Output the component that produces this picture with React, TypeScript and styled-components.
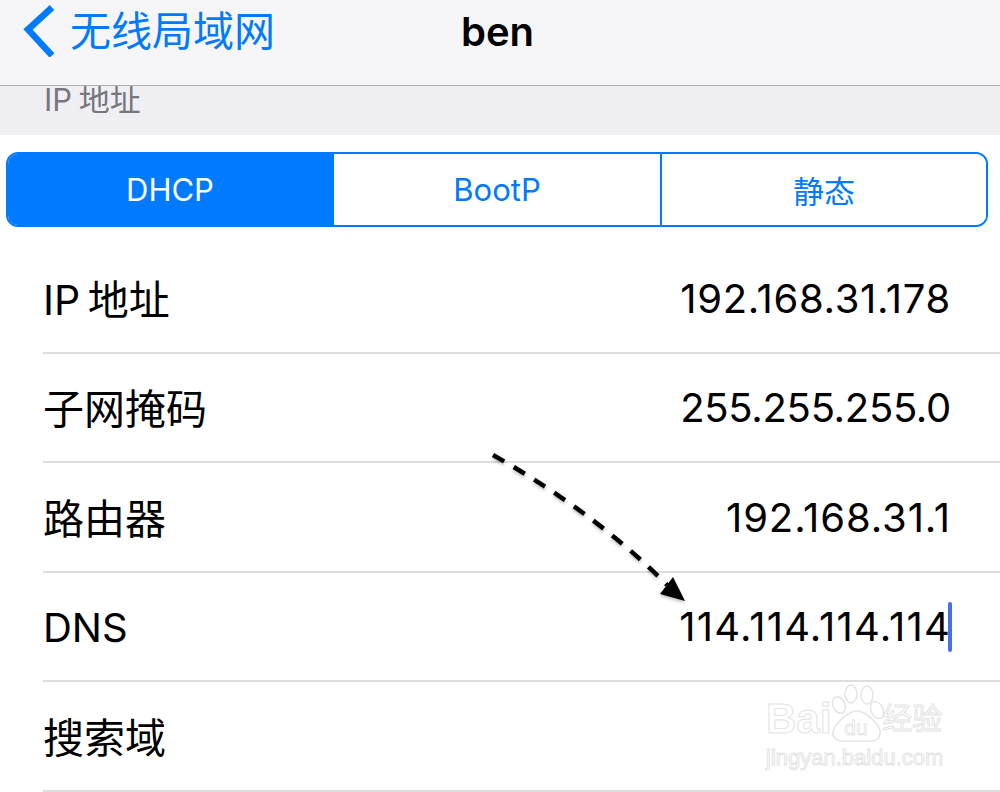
import React from "react";
import styled, { createGlobalStyle } from "styled-components";

const FONT = `Inter, "Noto Sans CJK SC", sans-serif`;

const rows = [
	{ label: "IP 地址", value: "192.168.31.178", tracking: 0.7 },
	{ label: "子网掩码", value: "255.255.255.0", tracking: -0.3 },
	{ label: "路由器", value: "192.168.31.1", tracking: 0.9 },
	{ label: "DNS", value: "114.114.114.114", tracking: 1.2, latin: true, focused: true },
	{ label: "搜索域", value: "", tracking: 0 },
];

const segments = ["DHCP", "BootP", "静态"];

const App = () => {
	return (
		<>
			<GlobalStyle />
			<Page>
				<NavBar>
					<BackLink>
						<svg width="34" height="52" viewBox="0 0 34 52">
							<path d="M30 4 L6 26 L30 52" transform="translate(0 -1.500)" fill="none" stroke="#007aff" strokeWidth="6.500" />
						</svg>
						<BackLabel>无线局域网</BackLabel>
					</BackLink>
					<NavTitle>ben</NavTitle>
				</NavBar>
				<SectionHeader>
					<SectionLabel>IP 地址</SectionLabel>
				</SectionHeader>
				<SegmentWrap>
					<Segmented>
						{segments.map((label, index) => (
							<Segment key={label} $active={index === 0}>
								{label}
							</Segment>
						))}
					</Segmented>
				</SegmentWrap>
				<List>
					{rows.map((row) => (
						<Row key={row.label}>
							<RowLabel $latin={row.latin}>{row.label}</RowLabel>
							<RowValue $tracking={row.tracking}>
								{row.value}
								{row.focused && <Caret />}
							</RowValue>
						</Row>
					))}
				</List>
				<ArrowMark width="210" height="160" viewBox="0 0 210 160">
					<defs>
						<filter id="soft" x="-10%" y="-10%" width="120%" height="120%">
							<feDropShadow dx="0" dy="2" stdDeviation="1.500" floodColor="#000" floodOpacity="0.25" />
						</filter>
					</defs>
					<g filter="url(#soft)">
						<path d="M3 3 C60 35 125 80 177 133" fill="none" stroke="#000" strokeWidth="4.500" strokeDasharray="13 11" />
						<path d="M195 149 L170 142 L183 125 Z" fill="#000" />
					</g>
				</ArrowMark>
				<Watermark>
					<PawRow>
						<WatermarkBrand>Bai</WatermarkBrand>
						<svg width="54" height="60" viewBox="0 0 54 60">
							<g fill="#fff" stroke="#e4e4e4" strokeWidth="1.500">
								<ellipse cx="8" cy="21" rx="6" ry="8.500" transform="rotate(-25 8 21)" />
								<ellipse cx="20" cy="10" rx="6" ry="9" />
								<ellipse cx="36" cy="11" rx="6" ry="9" />
								<ellipse cx="46" cy="26" rx="6" ry="9" transform="rotate(-25 46 26)" />
								<path d="M26 27 C35 27 51 42 49 50 C47 60 36 57 26 57 C16 57 4 60 2 50 C1 42 17 27 26 27 Z" />
							</g>
							<PawText x="25" y="51" textAnchor="middle">
								du
							</PawText>
						</svg>
						<WatermarkCn>经验</WatermarkCn>
					</PawRow>
					<WatermarkUrl>jingyan.baidu.com</WatermarkUrl>
				</Watermark>
			</Page>
		</>
	);
};

const GlobalStyle = createGlobalStyle`
	html, body {
		margin: 0;
		padding: 0;
		background: #fff;
	}
	body {
		font-family: ${FONT};
	}
`;
const Page = styled.div`
	position: relative;
	width: 1000px;
	height: 792px;
	overflow: hidden;
	background: #fff;
`;
const NavBar = styled.div`
	position: relative;
	display: flex;
	align-items: center;
	justify-content: center;
	height: 86px;
	box-sizing: border-box;
	padding: 0 5px 23px 0;
	background: #f6f6f8;
	border-bottom: 1px solid #b1b1b4;
`;
const BackLink = styled.div`
	position: absolute;
	left: 22px;
	top: 5px;
	display: flex;
	align-items: center;
	gap: 14px;
`;
const BackLabel = styled.span`
	font-size: 41px;
	line-height: 52px;
	color: #007aff;
`;
const NavTitle = styled.span`
	font-size: 40px;
	font-weight: 600;
	color: #000;
`;
const SectionHeader = styled.div`
	height: 49px;
	background: #efeff4;
	padding-left: 44px;
	overflow: hidden;
`;
const SectionLabel = styled.div`
	font-size: 31px;
	line-height: 32px;
	word-spacing: -2px;
	margin-top: -2px;
	color: #77777c;
`;
const SegmentWrap = styled.div`
	padding: 17px 12px 17px 6px;
`;
const Segmented = styled.div`
	display: grid;
	grid-template-columns: 324px 328px 1fr;
	height: 75px;
	box-sizing: border-box;
	border: 2px solid #007aff;
	border-radius: 12px;
	overflow: hidden;
`;
const Segment = styled.div<{ $active?: boolean }>`
	display: flex;
	align-items: center;
	justify-content: center;
	font-size: 31px;
	color: ${(p) => (p.$active ? "#fff" : "#007aff")};
	background: ${(p) => (p.$active ? "#007aff" : "#fff")};
	& + & {
		border-left: 2px solid #007aff;
	}
`;
const List = styled.div`
	padding-left: 43px;
`;
const Row = styled.div`
	display: flex;
	align-items: center;
	justify-content: space-between;
	height: 109.5px;
	box-sizing: border-box;
	padding-right: 49px;
	border-bottom: 2px solid #dededf;
`;
const RowLabel = styled.span<{ $latin?: boolean }>`
	font-size: ${(p) => (p.$latin ? 40 : 41)}px;
	word-spacing: -4px;
	margin-top: ${(p) => (p.$latin ? 2 : -2)}px;
	color: #000;
`;
const RowValue = styled.span<{ $tracking: number }>`
	display: inline-flex;
	align-items: center;
	font-size: 40px;
	letter-spacing: ${(p) => p.$tracking}px;
	margin-top: 1px;
	color: #000;
`;
const Caret = styled.i`
	display: block;
	width: 4px;
	height: 50px;
	margin-left: -3px;
	margin-right: -1px;
	border-radius: 2px;
	background: #4a6cf0;
`;
const ArrowMark = styled.svg`
	position: absolute;
	left: 490px;
	top: 452px;
`;
const Watermark = styled.div`
	position: absolute;
	left: 766px;
	top: 684px;
	width: 190px;
`;
const PawRow = styled.div`
	display: flex;
	align-items: flex-end;
`;
const outlined = `
	color: #fff;
	-webkit-text-stroke: 1px #e4e4e4;
	font-family: "Liberation Sans", "Noto Sans CJK SC", sans-serif;
`;
const WatermarkBrand = styled.span`
	${outlined}
	font-size: 42px;
	font-weight: 700;
	line-height: 46px;
	margin-bottom: 2px;
`;
const PawText = styled.text`
	fill: #fff;
	stroke: #e4e4e4;
	stroke-width: 0.800;
	font-family: "Liberation Sans", sans-serif;
	font-size: 21px;
`;
const WatermarkCn = styled.span`
	${outlined}
	font-size: 30px;
	line-height: 38px;
	margin: 0 0 6px -3px;
	white-space: nowrap;
`;
const WatermarkUrl = styled.div`
	${outlined}
	font-size: 22px;
	line-height: 24px;
	white-space: nowrap;
	margin-top: 2px;
`;

export default App;
